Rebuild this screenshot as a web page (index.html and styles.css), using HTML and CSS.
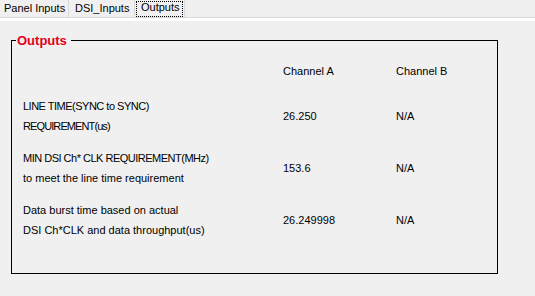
FILE: index.html
```html
<!DOCTYPE html>
<html>
<head>
<meta charset="utf-8">
<link rel="stylesheet" href="styles.css">
</head>
<body>
<div class="tabs">
  <div class="tab t1">Panel Inputs</div>
  <div class="tab t2">DSI_Inputs</div>
  <div class="tab t3"><span class="focus">Outputs</span></div>
</div>
<div class="band"></div>
<fieldset class="group">
  <legend>Outputs</legend>
  <div class="grid">
    <div></div>
    <div class="hdr">Channel A</div>
    <div class="hdr">Channel B</div>

    <div class="label"><div class="tight">LINE TIME(SYNC to SYNC)</div><div class="tighter">REQUIREMENT(us)</div></div>
    <div class="val">26.250</div>
    <div class="val">N/A</div>

    <div class="label"><div class="tight">MIN DSI Ch* CLK REQUIREMENT(MHz)</div><div>to meet the line time requirement</div></div>
    <div class="val">153.6</div>
    <div class="val">N/A</div>

    <div class="label"><div>Data burst time based on actual</div><div>DSI Ch*CLK and data throughput(us)</div></div>
    <div class="val">26.249998</div>
    <div class="val">N/A</div>
  </div>
</fieldset>
</body>
</html>
```
FILE: styles.css
```css
body {
  margin: 0;
  background: #f0f0f0;
  font-family: "Liberation Sans", Arial, sans-serif;
  font-size: 11px;
  color: #000;
}

.tabs {
  display: flex;
  height: 17px;
  line-height: 17px;
  border-bottom: 1px solid #d9d9d9;
}

.tab {
  box-sizing: border-box;
  border-right: 1px solid #d9d9d9;
  white-space: nowrap;
  height: 17px;
}

.t1 { width: 69px; padding-left: 4px; }
.t2 { width: 66px; padding-left: 6px; }
.t3 { width: 50px; padding: 1px 1px 0 1px; }

.focus {
  display: block;
  box-sizing: border-box;
  width: 47px;
  height: 16px;
  line-height: 11px;
  padding: 0 0 3px 4px;
  border: 1px dotted #000;
}

.band {
  height: 3px;
  background: #ffffff;
}

.group {
  margin: 12px 0 0 11px;
  width: 487px;
  box-sizing: border-box;
  border: 1px solid #000;
  padding: 13px 0 33px 4px;
  min-width: 0;
}

.group legend {
  padding: 0 4px 0 1px;
  font-weight: bold;
  font-size: 13px;
  line-height: 15px;
  color: #e0001a;
}

.grid {
  display: grid;
  grid-template-columns: 260px 113px 1fr;
  grid-template-rows: 23px 40px 40px 40px;
  row-gap: 12px;
  margin-left: 7px;
  line-height: 20px;
}

.hdr { align-self: start; }
.val { align-self: center; }
.label { white-space: nowrap; }
.tight { letter-spacing: -0.5px; }
.tighter { letter-spacing: -0.9px; }
```
